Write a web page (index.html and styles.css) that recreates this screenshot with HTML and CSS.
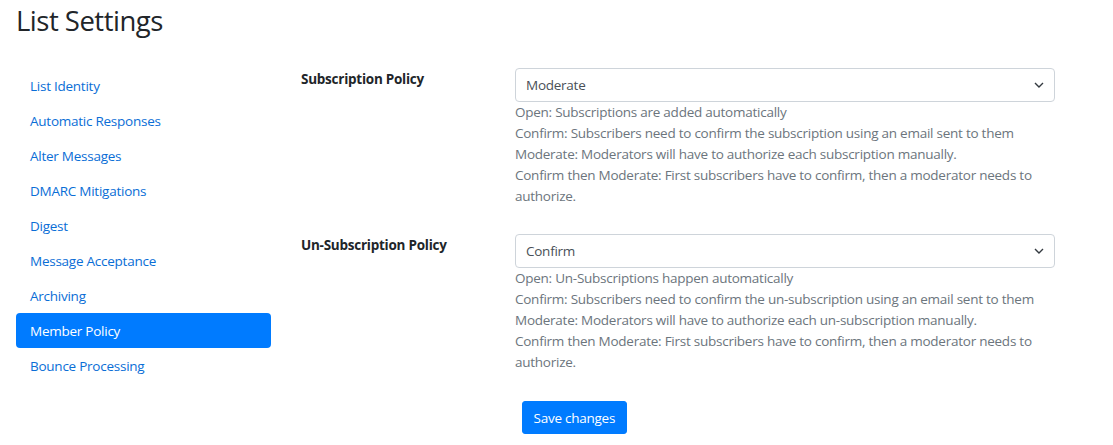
FILE: index.html
```html
<!DOCTYPE html>
<html>
<head>
<meta charset="utf-8">
<link rel="stylesheet" href="styles.css">
</head>
<body>
<div class="page">
  <h1 class="title">List Settings</h1>
  <div class="layout">
    <nav class="sidenav">
      <a class="nav-link" href="#">List Identity</a>
      <a class="nav-link" href="#">Automatic Responses</a>
      <a class="nav-link" href="#">Alter Messages</a>
      <a class="nav-link" href="#">DMARC Mitigations</a>
      <a class="nav-link" href="#">Digest</a>
      <a class="nav-link" href="#">Message Acceptance</a>
      <a class="nav-link" href="#">Archiving</a>
      <a class="nav-link active" href="#">Member Policy</a>
      <a class="nav-link" href="#">Bounce Processing</a>
    </nav>
    <form class="settings">
      <div class="form-group">
        <label class="form-label">Subscription Policy</label>
        <div class="field">
          <select class="form-select">
            <option>Open</option>
            <option>Confirm</option>
            <option selected>Moderate</option>
            <option>Confirm then Moderate</option>
          </select>
          <div class="help">
            Open: Subscriptions are added automatically<br>
            Confirm: Subscribers need to confirm the subscription using an email sent to them<br>
            Moderate: Moderators will have to authorize each subscription manually.<br>
            Confirm then Moderate: First subscribers have to confirm, then a moderator needs to authorize.
          </div>
        </div>
      </div>
      <div class="form-group">
        <label class="form-label">Un-Subscription Policy</label>
        <div class="field">
          <select class="form-select">
            <option>Open</option>
            <option selected>Confirm</option>
            <option>Moderate</option>
            <option>Confirm then Moderate</option>
          </select>
          <div class="help">
            Open: Un-Subscriptions happen automatically<br>
            Confirm: Subscribers need to confirm the un-subscription using an email sent to them<br>
            Moderate: Moderators will have to authorize each un-subscription manually.<br>
            Confirm then Moderate: First subscribers have to confirm, then a moderator needs to authorize.
          </div>
        </div>
      </div>
      <div class="actions">
        <button type="button" class="btn">Save changes</button>
      </div>
    </form>
  </div>
</div>
</body>
</html>
```
FILE: styles.css
```css
* { box-sizing: border-box; }
html, body { margin: 0; padding: 0; background: #fff; }
body {
  font-family: "Open Sans", "Noto Sans", sans-serif;
  font-size: 13.5px;
  letter-spacing: -0.25px;
  line-height: 21px;
  color: #212529;
}
.page { padding: 0 16px; }
.title {
  margin: 0;
  padding-top: 4px;
  height: 68px;
  font-size: 27.5px;
  letter-spacing: -0.5px;
  font-weight: 400;
  line-height: 1.2;
  color: #212529;
}
.layout {
  display: flex;
  gap: 30px;
}
.sidenav {
  width: 255px;
  flex: 0 0 255px;
  display: flex;
  flex-direction: column;
}
.nav-link {
  display: block;
  padding: 8px 14px 6px;
  line-height: 21px;
  color: #0a6ed6;
  text-decoration: none;
  border-radius: 4px;
}
.nav-link.active { background: #007bff; color: #fff; }
.settings {
  flex: 0 0 754px;
  width: 754px;
}
.form-group {
  display: flex;
  margin-bottom: 27px;
}
.form-label {
  flex: 0 0 214px;
  font-weight: 700;
  line-height: 21px;
  padding-top: 1px;
}
.field { flex: 0 0 540px; width: 540px; }
.form-select {
  display: block;
  width: 100%;
  height: 34px;
  padding: 0 28px 0 10px;
  font-family: inherit;
  font-size: 13.5px;
  letter-spacing: -0.25px;
  color: #495057;
  background: #fff url("data:image/svg+xml,%3csvg xmlns='http://www.w3.org/2000/svg' width='10' height='6' viewBox='0 0 10 6'%3e%3cpath d='M1 1l4 4 4-4' fill='none' stroke='%23343a40' stroke-width='1.4'/%3e%3c/svg%3e") no-repeat right 10px center / 10px 6px;
  border: 1px solid #ced4da;
  border-radius: 4px;
  appearance: none;
  -webkit-appearance: none;
}
.help {
  color: #6c757d;
  line-height: 21px;
  margin-top: 0;
}
.actions { padding-left: 221px; padding-top: 1px; }
.btn {
  height: 33px;
  padding: 1px 10.5px 0;
  font-family: inherit;
  font-size: 13.5px;
  letter-spacing: -0.25px;
  color: #fff;
  background: #007bff;
  border: 1px solid #007bff;
  border-radius: 3px;
}
```
